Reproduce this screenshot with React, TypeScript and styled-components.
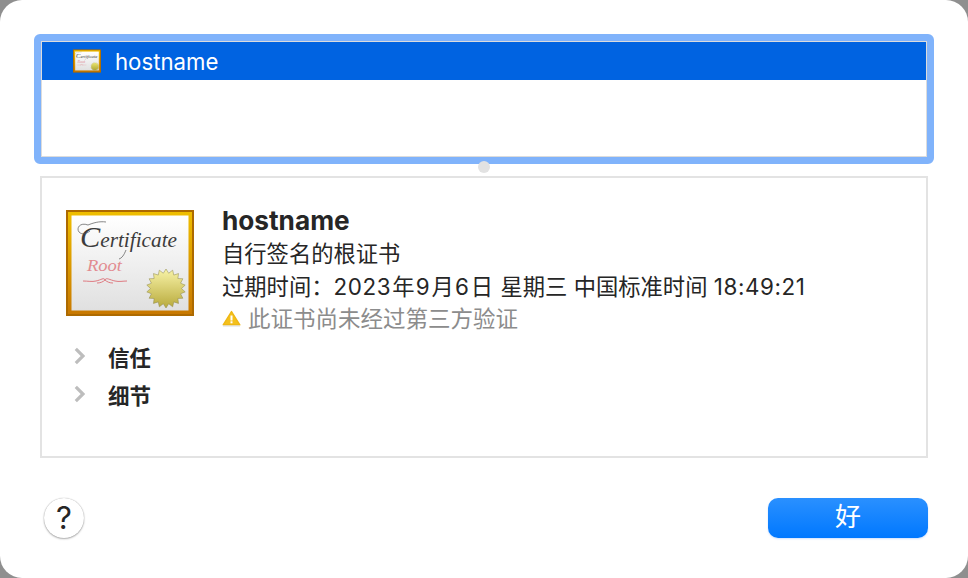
import React from "react";
import styled, { createGlobalStyle } from "styled-components";

const Global = createGlobalStyle`
  html, body { margin: 0; padding: 0; width: 968px; height: 578px; overflow: hidden; background: #8f8f8f; }
  * { box-sizing: border-box; }
`;

const font = `Inter, "Noto Sans CJK SC", sans-serif`;

const Dialog = styled.div`
  width: 968px;
  height: 578px;
  background: #ffffff;
  border-radius: 22px;
  padding: 34px 40px 40px 34px;
  display: flex;
  flex-direction: column;
  font-family: ${font};
  color: #242424;
  position: relative;
`;

const ListRing = styled.div`
  width: 900px;
  height: 130px;
  border: 7px solid #80b3fb;
  border-radius: 6px;
  background: #fff;
  box-shadow: inset 0 0 0 1px #dcdcdc;
  padding: 1px;
  flex: none;
`;

const ListRow = styled.div`
  height: 38px;
  background: #0063e1;
  color: #fff;
  display: flex;
  align-items: center;
  padding-left: 31px;
  gap: 14px;
  font-size: 22.2px;
  line-height: 38px;
`;

const RowLabel = styled.span`
  padding-top: 2px;
`;

const Splitter = styled.div`
  position: absolute;
  left: 478px;
  top: 161px;
  width: 12px;
  height: 12px;
  border-radius: 50%;
  background: #e2e2e2;
`;

const Panel = styled.div`
  margin: 12px 0 0 6px;
  width: 888px;
  height: 282px;
  border: 2px solid #e3e3e3;
  padding: 32px 0 0 24px;
  flex: none;
`;

const Summary = styled.div`
  display: flex;
  gap: 28px;
`;

const Info = styled.div`
  display: flex;
  flex-direction: column;
  margin-top: -6px;
`;

const Title = styled.div`
  font-size: 26.2px;
  font-weight: 700;
  line-height: 33px;
  color: #262626;
`;

const Line = styled.div`
  font-size: 22.3px;
  line-height: 33px;
  height: 33px;
  white-space: nowrap;
  color: #262626;
`;

const Digits = styled.span`
  font-size: 22.4px;
  letter-spacing: 0.6px;
`;

const Unit = styled.span`
  margin: 0 1.2px;
`;

const Warning = styled(Line)`
  font-size: 22.5px;
  color: #8c8c8c;
  display: flex;
  align-items: center;
  gap: 7px;
  margin-top: -1px;
`;

const Disclosures = styled.div`
  margin-top: 5px;
  display: flex;
  flex-direction: column;
  gap: 6px;
`;

const Disclosure = styled.div`
  display: flex;
  align-items: center;
  height: 32px;
  padding-left: 8px;
  gap: 23px;
  font-size: 21.5px;
  font-weight: 700;
  color: #262626;
`;

const Footer = styled.div`
  margin: 40px 0 0 10px;
  width: 884px;
  display: flex;
  justify-content: space-between;
  align-items: center;
  flex: none;
`;

const Help = styled.button`
  width: 40px;
  height: 40px;
  border-radius: 50%;
  border: none;
  background: #fff;
  box-shadow: 0 0 1px rgba(0, 0, 0, 0.35), 0 1px 2px rgba(0, 0, 0, 0.3);
  font-family: ${font};
  font-size: 31px;
  color: #262626;
  padding: 0;
  line-height: 40px;
`;

const Ok = styled.button`
  width: 160px;
  height: 40px;
  border: none;
  border-radius: 10px;
  background: linear-gradient(#2a90ff, #0078ff);
  box-shadow: 0 1px 2px rgba(0, 100, 255, 0.2);
  color: #fff;
  font-family: ${font};
  font-size: 26px;
  line-height: 36px;
  padding: 0 0 2px;
`;

const sealPoints = (() => {
  const pts: string[] = [];
  for (let i = 0; i < 36; i++) {
    const r = i % 2 === 0 ? 19.5 : 15.5;
    const a = (i / 36) * Math.PI * 2;
    pts.push(`${(100 + r * Math.sin(a)).toFixed(2)},${(78.5 - r * Math.cos(a)).toFixed(2)}`);
  }
  return pts.join(" ");
})();

const CertificateArt: React.FC<{ small?: boolean }> = ({ small }) => {
  const id = small ? "s" : "b";
  const w = small ? 28 : 128;
  const h = small ? 24 : 106;
  const inset = small ? 10 : 5.5;
  return (
    <svg width={w} height={h} viewBox="0 0 128 106" style={{ display: "block", flex: "none" }}>
      <defs>
        <linearGradient id={`frame${id}`} x1="0" y1="0" x2="0" y2="1">
          <stop offset="0" stopColor="#efbe00" />
          <stop offset="1" stopColor="#c87800" />
        </linearGradient>
        <linearGradient id={`paper${id}`} x1="0" y1="0" x2="0" y2="1">
          <stop offset="0" stopColor="#ffffff" />
          <stop offset="1" stopColor="#e0e0e0" />
        </linearGradient>
        <linearGradient id={`seal${id}`} x1="0" y1="0" x2="0" y2="1">
          <stop offset="0" stopColor={small ? "#eeea70" : "#f8f3a8"} />
          <stop offset="1" stopColor={small ? "#a8a030" : "#b8aa3c"} />
        </linearGradient>
      </defs>
      <rect x="0" y="0" width="128" height="106" fill="#ad6a00" />
      <rect x={small ? 4 : 2} y={small ? 4 : 2} width={small ? 120 : 124} height={small ? 98 : 102} fill={`url(#frame${id})`} />
      <rect x={inset} y={inset} width={128 - inset * 2} height={106 - inset * 2} fill={`url(#paper${id})`} />
      <text x="14" y="37" fontFamily="'Liberation Serif', serif" fontStyle="italic" fontSize="21" fill="#3c3c3c" textLength="97" lengthAdjust="spacingAndGlyphs">
        <tspan fontSize="30">C</tspan>ertificate
      </text>
      <path d="M22 15c-8-3-12 3-9 7 3 3 7 2 11-1M40 12c-7-1-13 1-18 3M60 40c-2 5-4 8-7 9" fill="none" stroke="#555" strokeWidth=".7" />
      <text x="21" y="61" fontFamily="'Liberation Serif', serif" fontStyle="italic" fontSize="17" fill="#e28b90" textLength="35" lengthAdjust="spacingAndGlyphs">Root</text>
      <path d="M17 71c5 0 9 1 13 0 5-1 8-4 9-1 1-3 5 0 10 1 4 1 8 0 12 0M31 73c3 0 6-1 8-3 2 2 5 3 8 3" fill="none" stroke="#dd6e76" strokeWidth=".9" />
      <polygon points={sealPoints} fill={`url(#seal${id})`} stroke="#8d8748" strokeWidth=".5" />
    </svg>
  );
};

const WarningIcon = () => (
  <svg width="19" height="17" viewBox="0 0 19 17" style={{ flex: "none" }}>
    <path d="M9.500 1.500 17.800 14.800H1.200z" fill="#f4c01c" stroke="#eeb714" strokeWidth="1.400" strokeLinejoin="round" />
    <path d="M1 16h17" stroke="#dcdcdc" strokeWidth="1" />
    <rect x="8.500" y="5.500" width="2" height="5" fill="#fff" />
    <rect x="8.500" y="11.300" width="2" height="2" fill="#fff" />
  </svg>
);

const Chevron = () => (
  <svg width="11" height="18" viewBox="0 0 11 18" style={{ flex: "none" }}>
    <path d="M1.800 1.800 9 9l-7.200 7.200" fill="none" stroke="#bdbdbd" strokeWidth="3.200" />
  </svg>
);

export default function App() {
  return (
    <>
      <Global />
      <Dialog>
        <ListRing>
          <ListRow>
            <CertificateArt small />
            <RowLabel>hostname</RowLabel>
          </ListRow>
        </ListRing>
        <Splitter />
        <Panel>
          <Summary>
            <CertificateArt />
            <Info>
              <Title>hostname</Title>
              <Line>自行签名的根证书</Line>
              <Line>
                过期时间：<Digits>2023</Digits><Unit>年</Unit><Digits>9</Digits><Unit>月</Unit>
                <Digits>6</Digits><Unit>日</Unit> 星期三 中国标准时间 <Digits>18:49:21</Digits>
              </Line>
              <Warning>
                <WarningIcon />
                此证书尚未经过第三方验证
              </Warning>
            </Info>
          </Summary>
          <Disclosures>
            <Disclosure>
              <Chevron />
              信任
            </Disclosure>
            <Disclosure>
              <Chevron />
              细节
            </Disclosure>
          </Disclosures>
        </Panel>
        <Footer>
          <Help>?</Help>
          <Ok>好</Ok>
        </Footer>
      </Dialog>
    </>
  );
}
